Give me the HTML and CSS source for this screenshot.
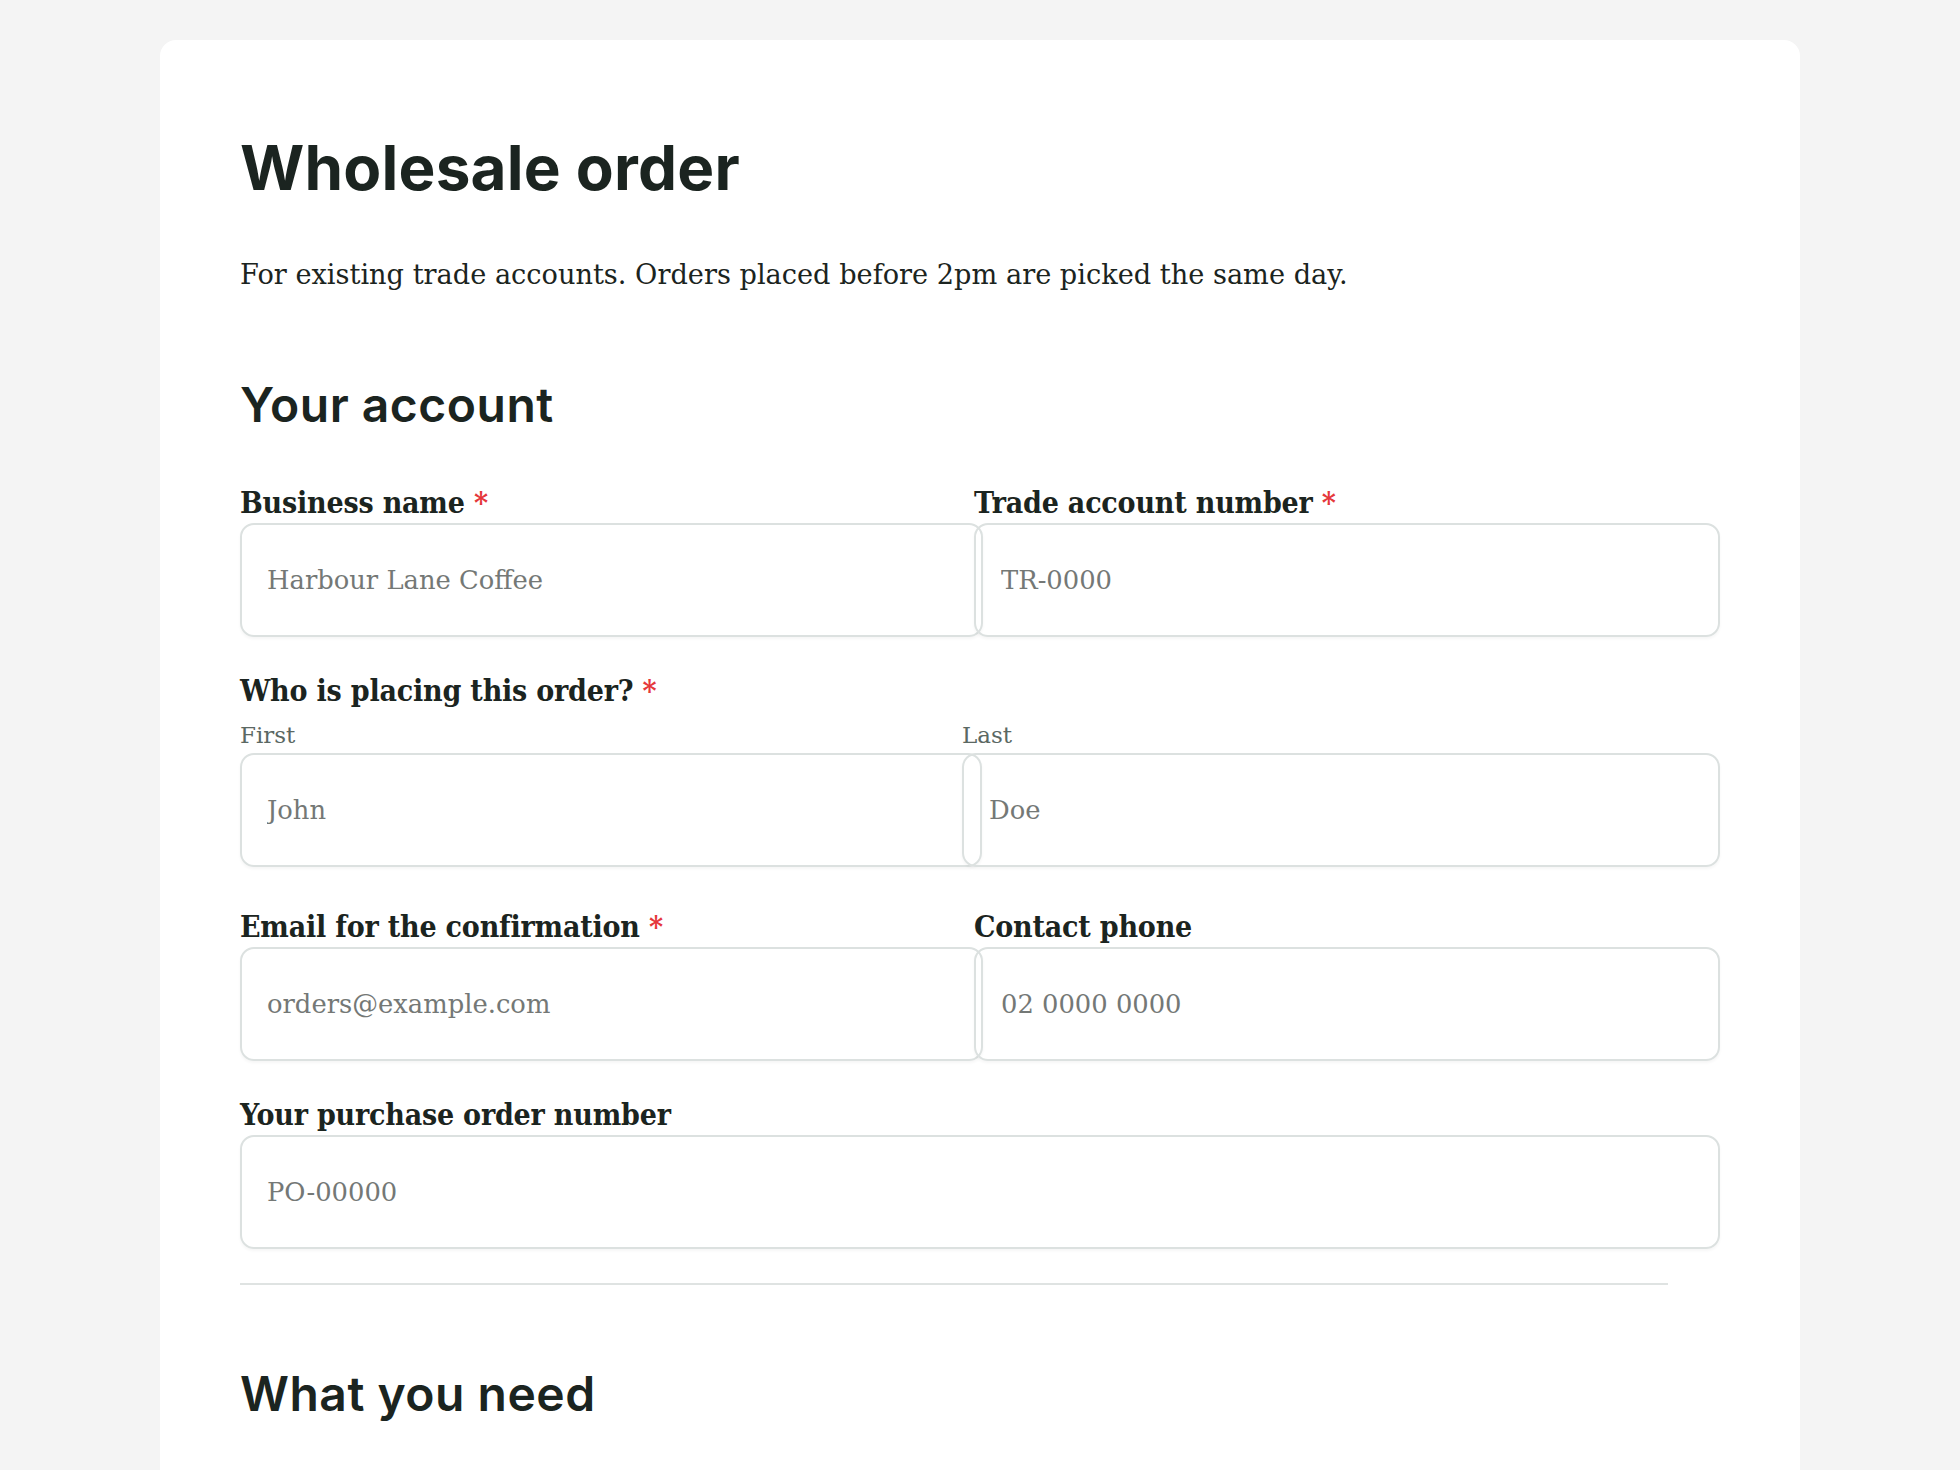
FILE: index.html
```html
<!DOCTYPE html>
<html lang="en">
<head>
<meta charset="utf-8">
<title>Wholesale order</title>
<link rel="stylesheet" href="styles.css">
</head>
<body>
<main class="page">
  <section class="card">
    <h1 class="title">Wholesale order</h1>
    <p class="intro">For existing trade accounts. Orders placed before 2pm are picked the same day.</p>

    <h2 class="section-title section-first">Your account</h2>

    <div class="row row-split">
      <div class="field">
        <label class="label" for="biz">Business name <span class="req">*</span></label>
        <input class="input input-wide" id="biz" type="text" placeholder="Harbour Lane Coffee">
      </div>
      <div class="field">
        <label class="label" for="acct">Trade account number <span class="req">*</span></label>
        <input class="input" id="acct" type="text" placeholder="TR-0000">
      </div>
    </div>

    <div class="name-group">
      <div class="label">Who is placing this order? <span class="req">*</span></div>
      <div class="row row-names">
        <div class="field">
          <label class="sublabel" for="first">First</label>
          <input class="input input-wider" id="first" type="text" placeholder="John">
        </div>
        <div class="field">
          <label class="sublabel" for="last">Last</label>
          <input class="input" id="last" type="text" placeholder="Doe">
        </div>
      </div>
    </div>

    <div class="row row-split">
      <div class="field">
        <label class="label" for="email">Email for the confirmation <span class="req">*</span></label>
        <input class="input input-wide" id="email" type="email" placeholder="orders@example.com">
      </div>
      <div class="field">
        <label class="label" for="phone">Contact phone</label>
        <input class="input" id="phone" type="tel" placeholder="02 0000 0000">
      </div>
    </div>

    <div class="row">
      <div class="field">
        <label class="label" for="po">Your purchase order number</label>
        <input class="input" id="po" type="text" placeholder="PO-00000">
      </div>
    </div>

    <hr class="divider">

    <h2 class="section-title section-next">What you need</h2>
  </section>
</main>
</body>
</html>
```

FILE: styles.css
```css
* {
  box-sizing: border-box;
}

html,
body {
  margin: 0;
  padding: 0;
}

body {
  background: #f4f4f4;
  color: #1b2420;
  font-family: "DejaVu Serif", "Liberation Serif", serif;
}

.page {
  padding: 40px 160px 0;
}

.card {
  background: #ffffff;
  border-radius: 16px;
  padding: 92px 80px 120px;
}

.title {
  margin: 0;
  font-family: Inter, "Liberation Sans", sans-serif;
  font-weight: 700;
  font-size: 62px;
  line-height: 72px;
  letter-spacing: 0.2px;
  color: #1b2420;
}

.intro {
  margin: 51px 0 0;
  font-size: 27.2px;
  line-height: 40px;
  color: #1b2420;
}

.section-title {
  margin: 0;
  font-family: Inter, "Liberation Sans", sans-serif;
  font-weight: 600;
  font-size: 48px;
  line-height: 56px;
  letter-spacing: 0.5px;
  color: #1b2420;
}

.section-first {
  margin-top: 82px;
}

.section-next {
  margin-top: 81px;
}

.row {
  display: grid;
  grid-template-columns: 1fr;
  margin-bottom: 34px;
}

.section-first + .row {
  margin-top: 50px;
}

.row-split {
  grid-template-columns: 734px 746px;
}

.row-names {
  grid-template-columns: 722px 758px;
  margin-bottom: 0;
}

.name-group {
  margin-bottom: 40px;
}

.name-group > .label {
  margin-bottom: 9px;
}

.field {
  display: flex;
  flex-direction: column;
  min-width: 0;
}

.label {
  display: block;
  font-weight: 700;
  font-size: 30px;
  font-stretch: condensed;
  line-height: 40px;
  letter-spacing: -0.2px;
  color: #1b2420;
}

.req {
  color: #e5383b;
  font-weight: 700;
  letter-spacing: 0;
}

.sublabel {
  display: block;
  font-size: 23px;
  line-height: 30px;
  margin-bottom: 3px;
  color: #5b6863;
}

.input {
  display: block;
  width: 100%;
  height: 114px;
  margin: 0;
  padding: 0 25px;
  border: 2px solid #dce1e0;
  border-radius: 14px;
  background: transparent;
  box-shadow: 0 2px 3px rgba(0, 0, 0, 0.04);
  font-family: "DejaVu Serif", "Liberation Serif", serif;
  font-size: 25.8px;
  color: #1b2420;
  outline: none;
}

.input::placeholder {
  color: #747876;
  opacity: 1;
}

.input-wide {
  width: calc(100% + 9px);
}

.input-wider {
  width: calc(100% + 20px);
}

.divider {
  width: 1428px;
  height: 2px;
  margin: 0;
  border: 0;
  background: #dfe3e2;
}
```
